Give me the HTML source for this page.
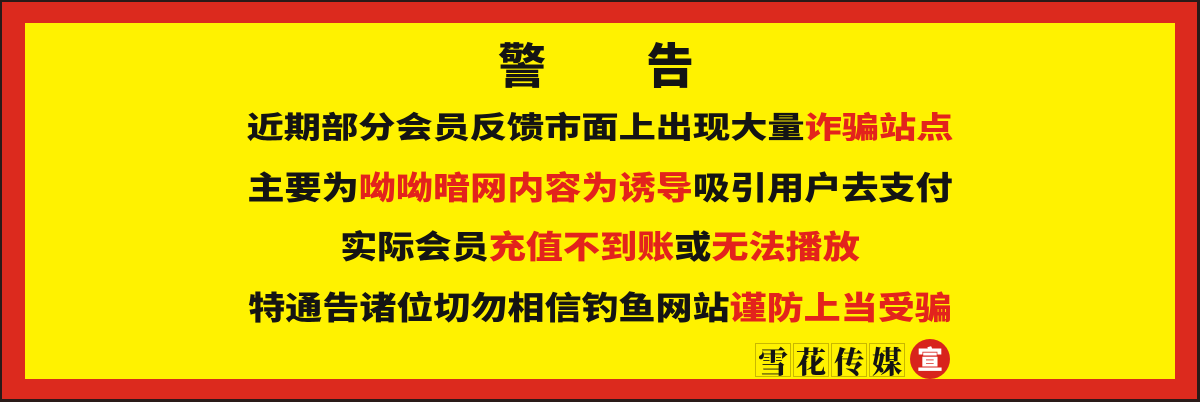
<html><head><style>
body{margin:0;width:1200px;height:402px;background:#2a1a18;overflow:hidden}
.r{position:absolute;left:2px;top:2px;width:1195px;height:397px;background:#dc2a1e}
.y{position:absolute;left:25px;top:23px;width:1150px;height:356px;background:#fff200}
.t{position:absolute;left:0;width:1200px;text-align:center;font-family:"Liberation Sans","Noto Sans CJK SC",sans-serif;font-weight:900;color:#141414;white-space:nowrap;line-height:1}
.t span.s{display:inline-block}
.red{color:#e3231c}
.lg{position:absolute;top:343px;font-family:"Noto Serif CJK SC","Noto Sans CJK SC",serif;font-weight:900;font-size:30px;color:#141414;width:36px;height:34px;border:1px solid #c9b800;box-sizing:border-box;text-align:center;line-height:33px}
</style></head><body>
<div class="r"></div><div class="y"></div>
<div class="t" style="top:44px;font-size:48px"><span class="s" style="letter-spacing:100px;margin-left:92px">警告</span></div>
<div class="t" style="top:114px;font-size:30px"><span class="s" style="transform:scaleX(1.24)">近期部分会员反馈市面上出现大量<span class="red">诈骗站点</span></span></div>
<div class="t" style="top:172px;font-size:32px"><span class="s" style="transform:scaleX(1.16)">主要为<span class="red">呦呦暗网内容为诱导</span>吸引用户去支付</span></div>
<div class="t" style="top:231px;font-size:32px"><span class="s" style="transform:scaleX(1.16)">实际会员<span class="red">充值不到账</span>或<span class="red">无法播放</span></span></div>
<div class="t" style="top:292px;font-size:32px"><span class="s" style="transform:scaleX(1.157)">特通告诸位切勿相信钓鱼网站<span class="red">谨防上当受骗</span></span></div>
<div class="lg" style="left:755px">雪</div><div class="lg" style="left:793px">花</div><div class="lg" style="left:831px">传</div><div class="lg" style="left:869px">媒</div>
<div style="position:absolute;left:910px;top:339px;width:40px;height:40px;border-radius:50%;background:#d8231c;color:#fff;font-family:'Noto Sans CJK SC',sans-serif;font-weight:900;font-size:26px;text-align:center;line-height:40px">宣</div>
</body></html>
